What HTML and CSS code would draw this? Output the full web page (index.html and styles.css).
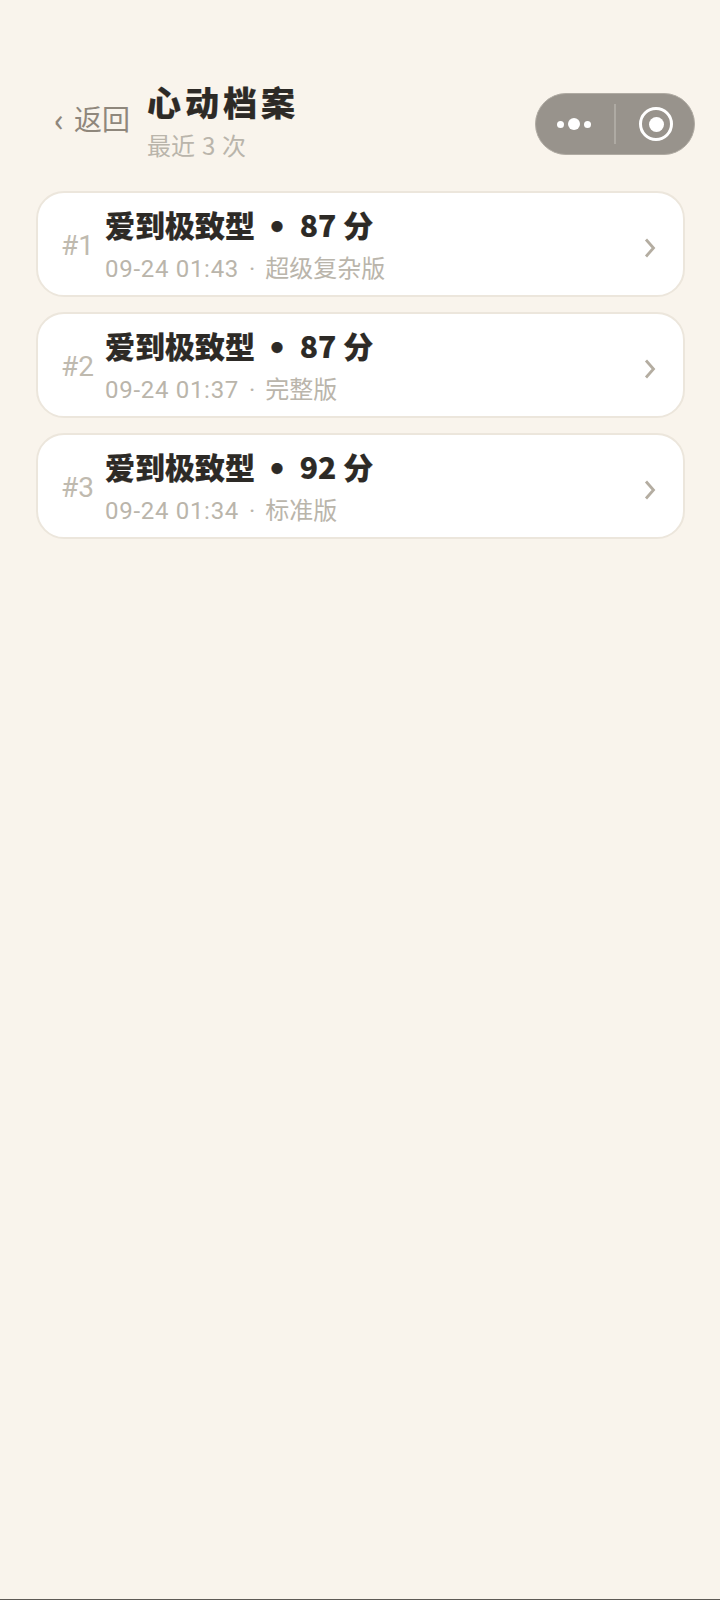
FILE: index.html
```html
<!DOCTYPE html>
<html lang="zh-CN">
<head>
    <meta charset="UTF-8">
    <title>心动档案</title>
    <link rel="stylesheet" href="styles.css">
</head>
<body>
<div class="page">
    <div class="header">
        <div class="back">
            <span class="backArrow">‹</span>
            <span class="backText">返回</span>
        </div>
        <div class="headText">
            <div class="title">心动档案</div>
            <div class="subtitle">最近 3 次</div>
        </div>
        <div class="capsule">
            <div class="dots">
                <span class="dot"></span>
                <span class="dot dotBig"></span>
                <span class="dot"></span>
            </div>
            <span class="capsuleLine"></span>
            <div class="ring"><span class="ringCore"></span></div>
        </div>
    </div>
    <div class="list">
        <div class="card">
            <div class="rank">#1</div>
            <div class="info">
                <div class="name">爱到极致型 <span class="sep">•</span> 87 分</div>
                <div class="meta"><span class="time">09-24 01:43</span><span class="metaDot">·</span><span>超级复杂版</span></div>
            </div>
            <svg class="chevron" viewBox="0 0 12 20"><path d="M2 1.5 L9.5 10 L2 18.5"/></svg>
        </div>
        <div class="card">
            <div class="rank">#2</div>
            <div class="info">
                <div class="name">爱到极致型 <span class="sep">•</span> 87 分</div>
                <div class="meta"><span class="time">09-24 01:37</span><span class="metaDot">·</span><span>完整版</span></div>
            </div>
            <svg class="chevron" viewBox="0 0 12 20"><path d="M2 1.5 L9.5 10 L2 18.5"/></svg>
        </div>
        <div class="card">
            <div class="rank">#3</div>
            <div class="info">
                <div class="name">爱到极致型 <span class="sep">•</span> 92 分</div>
                <div class="meta"><span class="time">09-24 01:34</span><span class="metaDot">·</span><span>标准版</span></div>
            </div>
            <svg class="chevron" viewBox="0 0 12 20"><path d="M2 1.5 L9.5 10 L2 18.5"/></svg>
        </div>
    </div>
</div>
</body>
</html>
```

FILE: styles.css
```css
* {
    box-sizing: border-box;
}

html, body {
    margin: 0;
    padding: 0;
}

body {
    background-color: #f9f4ec;
    font-family: "Noto Sans CJK SC", "Noto Sans", sans-serif;
}

.page {
    height: 1600px;
    padding: 82px 25px 0 36px;
    border-bottom: 1px solid #5d5a55;
}

.header {
    display: flex;
    align-items: flex-start;
    height: 109px;
}

.back {
    display: flex;
    align-items: center;
    width: 111px;
    height: 36px;
    margin-top: 18px;
    padding-left: 18px;
    color: #8f877c;
}

.backArrow {
    width: 20px;
    font-size: 32px;
    line-height: 36px;
    font-weight: 500;
}

.backText {
    font-size: 28px;
    line-height: 36px;
}

.headText {
    flex: 1;
}

.title {
    height: 44px;
    font-size: 34px;
    line-height: 40px;
    font-weight: 900;
    letter-spacing: 4px;
    color: #2d2a26;
    -webkit-text-stroke: 0.2px #2d2a26;
}

.subtitle {
    margin-top: 3px;
    font-size: 24px;
    line-height: 32px;
    word-spacing: 1.5px;
    color: #bab5ab;
}

.capsule {
    display: flex;
    align-items: center;
    width: 160px;
    height: 62px;
    margin-top: 11px;
    border-radius: 31px;
    background-color: #98938c;
    border: 1px solid #b0aba3;
}

.dots {
    display: flex;
    align-items: center;
    justify-content: center;
    gap: 4px;
    width: 76px;
    margin-right: 2px;
}

.dot {
    width: 7px;
    height: 7px;
    border-radius: 50%;
    background-color: #fff;
}

.dotBig {
    width: 12px;
    height: 12px;
}

.capsuleLine {
    width: 2px;
    height: 40px;
    background-color: #aeaaa3;
}

.ring {
    display: flex;
    align-items: center;
    justify-content: center;
    width: 34px;
    height: 34px;
    margin-left: 23px;
    border: 3px solid #fff;
    border-radius: 50%;
}

.ringCore {
    width: 15px;
    height: 15px;
    border-radius: 50%;
    background-color: #fff;
}

.list {
    display: flex;
    flex-direction: column;
    gap: 15px;
    width: 649px;
}

.card {
    display: flex;
    align-items: center;
    height: 106px;
    padding: 0 27px 0 23px;
    background-color: #fff;
    border: 2px solid #ece6dc;
    border-radius: 28px;
}

.rank {
    width: 44px;
    margin-top: 2px;
    font-family: Roboto, sans-serif;
    font-size: 28px;
    color: #bfbaaf;
}

.info {
    flex: 1;
    margin-top: 4px;
}

.name {
    font-size: 30px;
    line-height: 40px;
    font-weight: 900;
    color: #2d2a26;
    -webkit-text-stroke: 0.2px #2d2a26;
}

.sep {
    display: inline-block;
    margin-right: 1px;
    transform: scale(1.3);
}

.meta {
    margin-top: 4px;
    font-size: 24px;
    line-height: 38px;
    color: #bab5ab;
}

.time {
    font-family: Roboto, sans-serif;
    letter-spacing: 0.7px;
}

.metaDot {
    margin: 0 10px;
    font-family: Roboto, sans-serif;
}

.chevron {
    width: 12px;
    height: 20px;
    margin-top: 8px;
    fill: none;
    stroke: #b4ada1;
    stroke-width: 2.8;
}
```
